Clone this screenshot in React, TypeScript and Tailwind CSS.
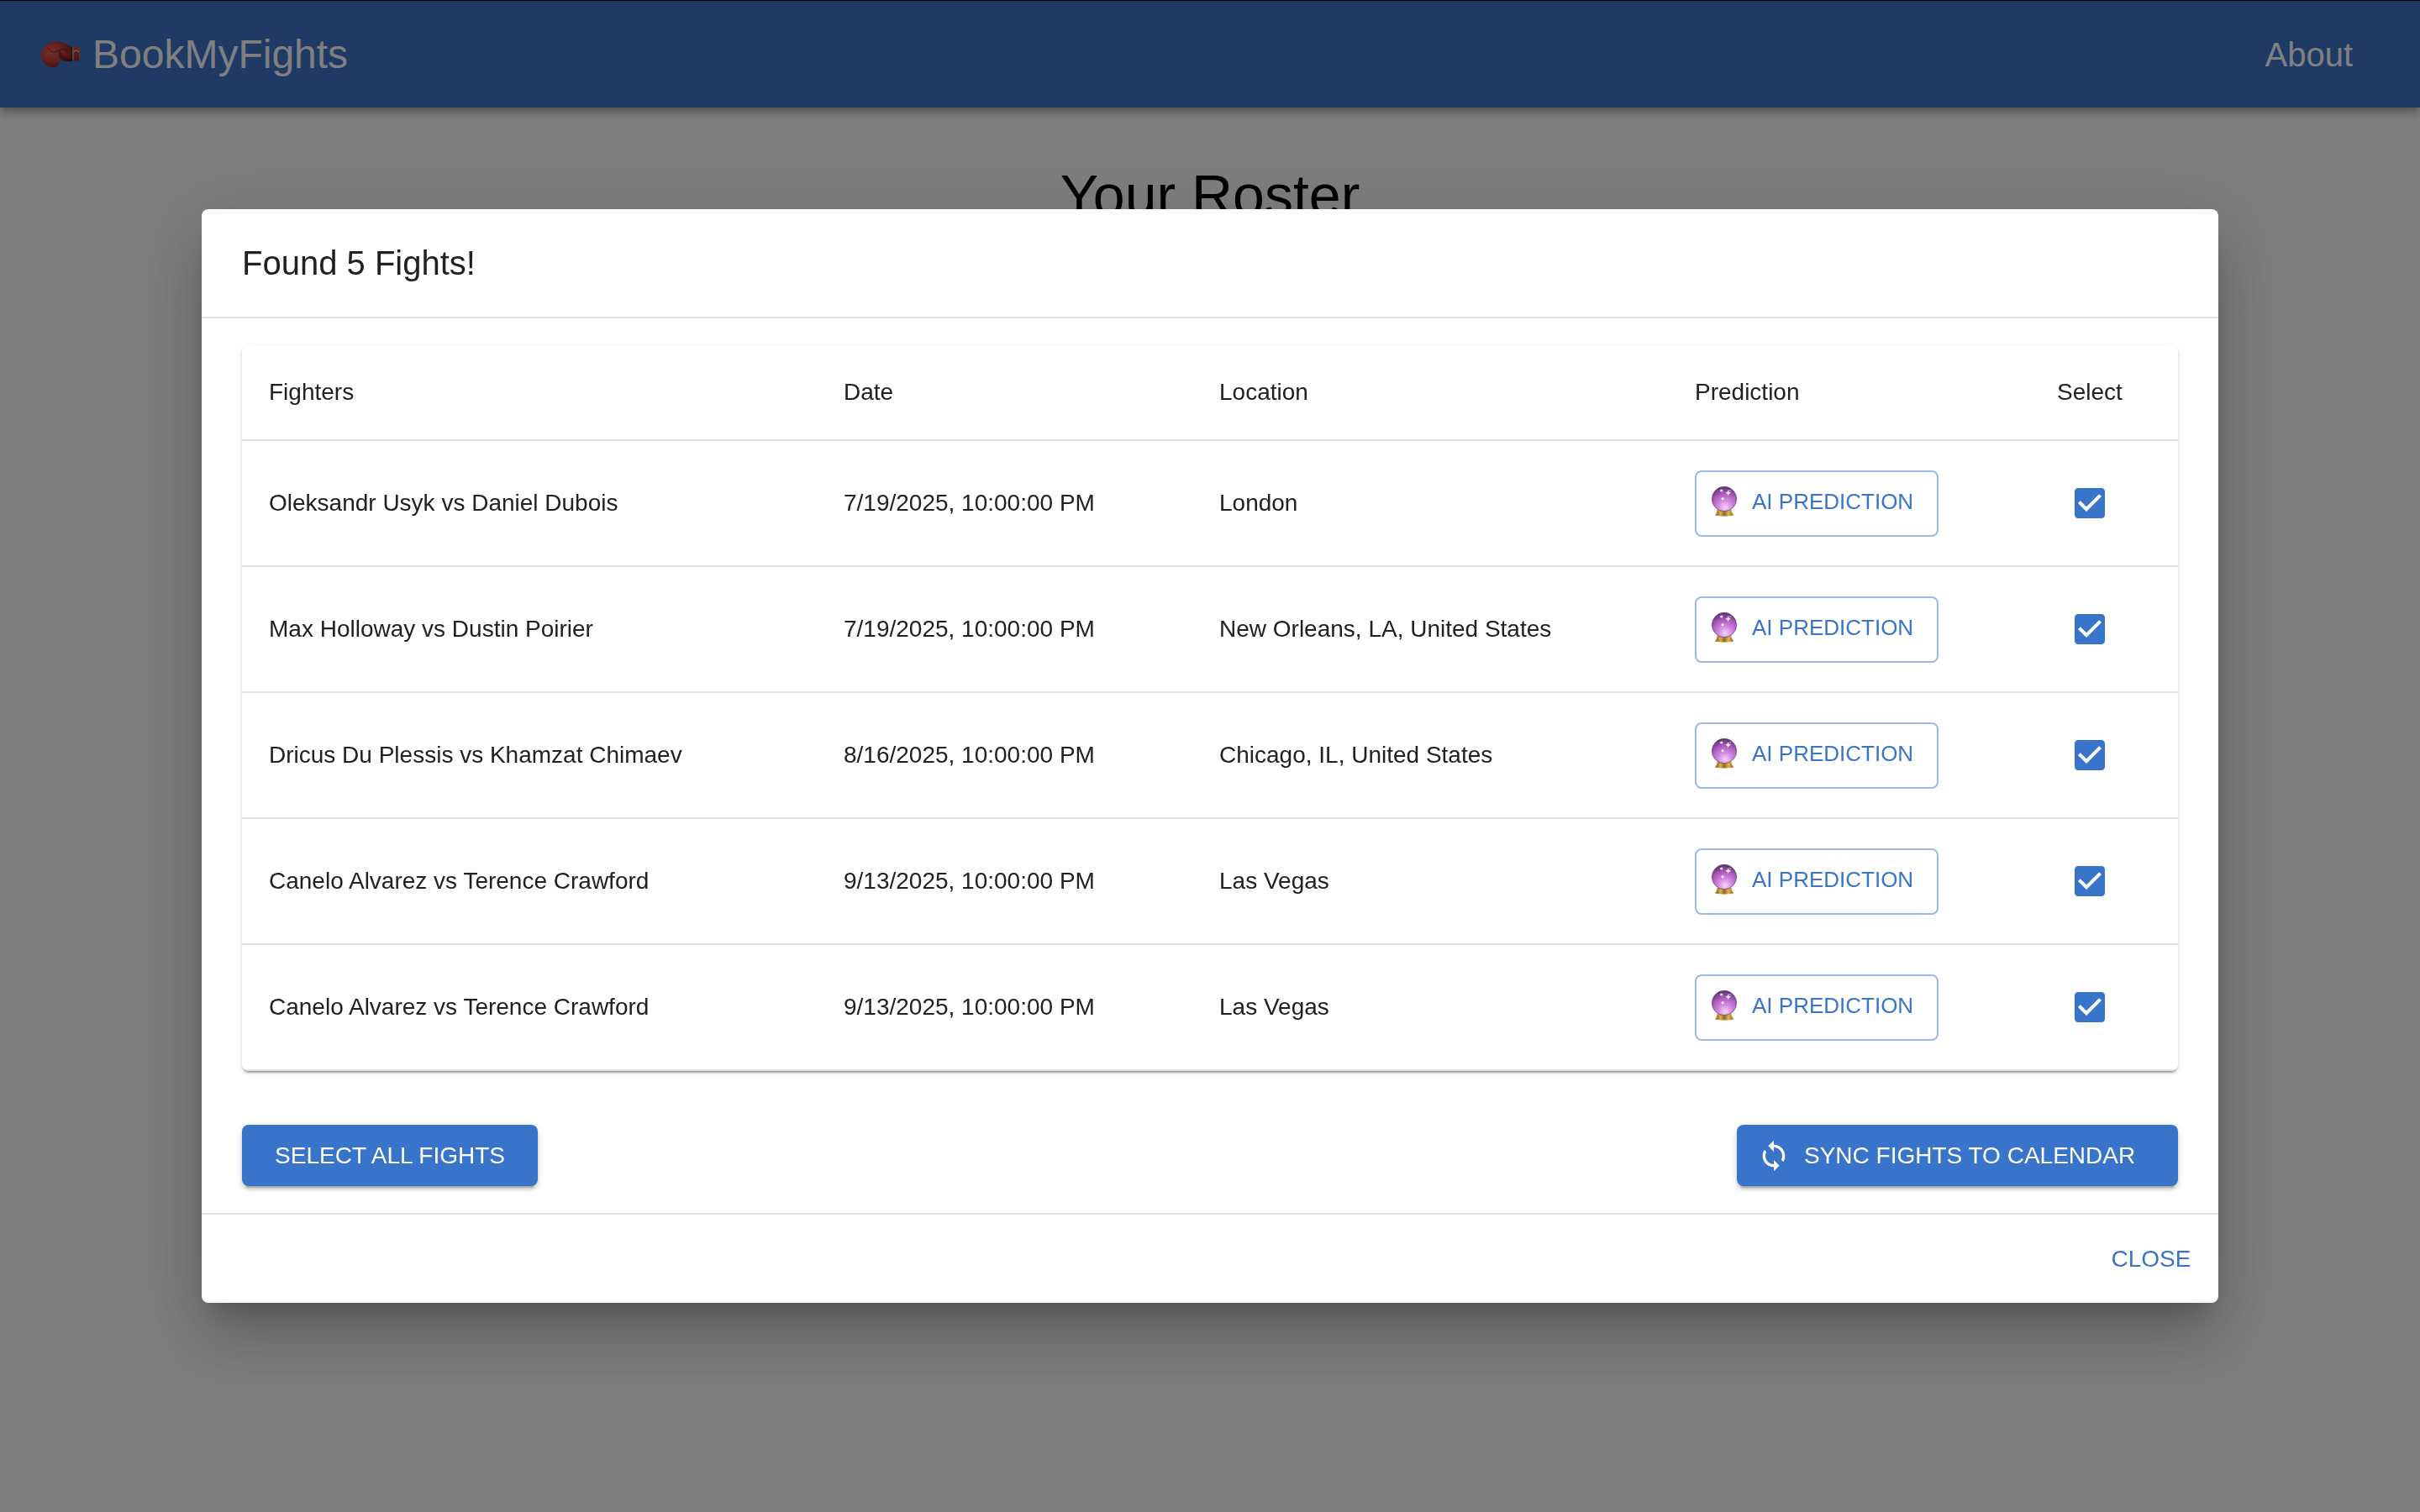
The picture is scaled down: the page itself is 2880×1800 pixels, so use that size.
import { useState } from "react";

type Fight = { id: number; fighters: string; date: string; location: string };

const fights: Fight[] = [
  { id: 1, fighters: "Oleksandr Usyk vs Daniel Dubois", date: "7/19/2025, 10:00:00 PM", location: "London" },
  { id: 2, fighters: "Max Holloway vs Dustin Poirier", date: "7/19/2025, 10:00:00 PM", location: "New Orleans, LA, United States" },
  { id: 3, fighters: "Dricus Du Plessis vs Khamzat Chimaev", date: "8/16/2025, 10:00:00 PM", location: "Chicago, IL, United States" },
  { id: 4, fighters: "Canelo Alvarez vs Terence Crawford", date: "9/13/2025, 10:00:00 PM", location: "Las Vegas" },
  { id: 5, fighters: "Canelo Alvarez vs Terence Crawford", date: "9/13/2025, 10:00:00 PM", location: "Las Vegas" },
];

function BoxingGlove() {
  return (
    <svg aria-hidden="true" viewBox="24 36 144 98" className="h-[33px] w-12 shrink-0">
      <defs>
        <radialGradient id="glove" cx="0.34" cy="0.42" r="0.68">
          <stop offset="0" stopColor="#e0605a" />
          <stop offset="0.5" stopColor="#c8423f" />
          <stop offset="0.85" stopColor="#98292a" />
          <stop offset="1" stopColor="#5e1212" />
        </radialGradient>
        <linearGradient id="cuff" x1="0" y1="0" x2="0" y2="1">
          <stop offset="0" stopColor="#d04a46" />
          <stop offset="1" stopColor="#8c2422" />
        </linearGradient>
      </defs>
      <path
        d="M26 88C26 66 44 49 62 42C82 35 108 41 122 51C128 56 134 59 140 59V108C128 111 112 110 100 106C92 107 94 113 90 121C84 132 70 134 58 130C40 124 26 108 26 88Z"
        fill="url(#glove)"
      />
      <path d="M92 70C86 78 94 86 88 94C92 98 96 102 100 106C112 110 128 111 138 108C120 103 104 88 92 70Z" fill="#4a0c0c" opacity="0.45" />
      <path d="M52 63C56 74 66 79 78 77C88 75 92 67 102 67C110 67 118 72 124 79" fill="none" stroke="#7c2020" strokeWidth="3" strokeLinecap="round" />
      <rect x="139" y="59" width="27" height="49" rx="3" fill="url(#cuff)" />
      <path d="M141 60V107" stroke="#b9a9a2" strokeWidth="4" />
      <path d="M164 61V106" stroke="#b9a9a2" strokeWidth="3" strokeDasharray="4 3" />
      <path d="M143 78C146 69 158 69 161 78" fill="none" stroke="#d9cfca" strokeWidth="4" />
      <path d="M147 81V104M158 81V104" stroke="#8a2a27" strokeWidth="2" />
    </svg>
  );
}

function CrystalBall() {
  return (
    <svg aria-hidden="true" viewBox="74 28 102 114" className="h-[38px] w-[34px] shrink-0">
      <defs>
        <radialGradient id="orb" cx="0.54" cy="0.84" r="0.88">
          <stop offset="0" stopColor="#f6d2fb" />
          <stop offset="0.3" stopColor="#d48ce2" />
          <stop offset="0.65" stopColor="#a858ba" />
          <stop offset="1" stopColor="#4f2a5c" />
        </radialGradient>
        <linearGradient id="stand" x1="0" y1="0" x2="1" y2="0">
          <stop offset="0" stopColor="#7c5a1d" />
          <stop offset="0.3" stopColor="#d9ac45" />
          <stop offset="0.5" stopColor="#8f6a22" />
          <stop offset="0.72" stopColor="#e2b850" />
          <stop offset="1" stopColor="#7c5a1d" />
        </linearGradient>
      </defs>
      <path d="M100 114H150C151 122 154 129 159 134C148 139 102 139 92 134C97 129 99 122 100 114Z" fill="url(#stand)" />
      <circle cx="125" cy="76" r="44" fill="url(#orb)" stroke="#5d3a6b" strokeWidth="2" />
      <circle cx="115" cy="46" r="4.5" fill="#fff" />
      <circle cx="119" cy="75" r="4.5" fill="#fff" />
      <path d="M139 44L142 51L149 54L142 57L139 64L136 57L129 54L136 51Z" fill="#fff" />
      <circle cx="146" cy="46" r="2.5" fill="#fff" opacity="0.8" />
    </svg>
  );
}

function SyncIcon() {
  return (
    <svg aria-hidden="true" viewBox="0 0 24 24" className="size-10 shrink-0" fill="currentColor">
      <path d="M12 4V1L8 5l4 4V6c3.31 0 6 2.69 6 6 0 1.01-.25 1.97-.7 2.8l1.46 1.46C19.54 15.03 20 13.57 20 12c0-4.42-3.58-8-8-8m0 14c-3.31 0-6-2.69-6-6 0-1.01.25-1.97.7-2.8L5.24 7.74C4.46 8.97 4 10.43 4 12c0 4.42 3.58 8 8 8v3l4-4-4-4z" />
    </svg>
  );
}

function FightCheckbox({ label, checked, onChange }: { label: string; checked: boolean; onChange: () => void }) {
  return (
    <label className="inline-grid size-[84px] cursor-pointer place-items-center text-[#3974cb]">
      <input
        type="checkbox"
        aria-label={label}
        checked={checked}
        onChange={onChange}
        className="col-start-1 row-start-1 size-12 cursor-pointer appearance-none"
      />
      <svg aria-hidden="true" viewBox="0 0 24 24" className="pointer-events-none col-start-1 row-start-1 size-12" fill="currentColor">
        {checked ? (
          <path d="M19 3H5c-1.11 0-2 .9-2 2v14c0 1.1.89 2 2 2h14c1.11 0 2-.9 2-2V5c0-1.1-.89-2-2-2zm-9 14l-5-5 1.41-1.41L10 14.17l7.59-7.59L19 8l-9 9z" />
        ) : (
          <path d="M19 5v14H5V5h14m0-2H5c-1.1 0-2 .9-2 2v14c0 1.1.9 2 2 2h14c1.1 0 2-.9 2-2V5c0-1.1-.9-2-2-2z" />
        )}
      </svg>
    </label>
  );
}

const contained =
  "flex h-[73px] items-center rounded-lg bg-[#3974cb] text-[28px] leading-[49px] text-white uppercase shadow-[0_6px_2px_-4px_rgba(0,0,0,0.2),0_4px_4px_0_rgba(0,0,0,0.14),0_2px_10px_0_rgba(0,0,0,0.12)]";

const headCell = "h-[114px] border-b-2 border-[#e0e0e0] px-8 font-normal";
const bodyCell = "h-[150px] border-b-2 border-[#e0e0e0] px-8";

export default function App() {
  const [selected, setSelected] = useState<number[]>(fights.map((f) => f.id));
  const toggle = (id: number) =>
    setSelected((ids) => (ids.includes(id) ? ids.filter((i) => i !== id) : [...ids, id]));

  return (
    <div className="min-h-screen bg-white font-['Liberation_Sans',Arial,sans-serif] text-black">
      <header className="flex h-32 items-center justify-between border-t border-black bg-[#3c74ca] px-12 text-white shadow-[0_4px_8px_-2px_rgba(0,0,0,0.2),0_8px_10px_0_rgba(0,0,0,0.14),0_2px_20px_0_rgba(0,0,0,0.12)]">
        <a href="#home" className="flex items-center gap-3.5 text-5xl">
          <BoxingGlove />
          BookMyFights
        </a>
        <nav>
          <a href="#about" className="px-8 text-[40px] leading-[64px]">About</a>
        </nav>
      </header>
      <main className="pt-[62px]">
        <h1 className="text-center text-[68px] leading-[84px]">Your Roster</h1>
      </main>

      <div className="fixed inset-0 flex items-center justify-center bg-black/50 px-16">
        <div
          role="dialog"
          aria-modal="true"
          aria-labelledby="dialog-title"
          className="w-full max-w-[2400px] rounded-lg bg-white text-[#212121] shadow-[0_22px_30px_-14px_rgba(0,0,0,0.2),0_48px_76px_6px_rgba(0,0,0,0.14),0_18px_92px_16px_rgba(0,0,0,0.12)]"
        >
          <h2 id="dialog-title" className="px-12 py-8 text-[40px] leading-[64px]">Found 5 Fights!</h2>

          <div className="border-y-2 border-[#e0e0e0] px-12 py-8">
            <div className="overflow-hidden rounded-lg shadow-[0_4px_2px_-2px_rgba(0,0,0,0.2),0_2px_2px_0_rgba(0,0,0,0.14),0_2px_6px_0_rgba(0,0,0,0.12)]">
              <table className="w-full table-fixed border-separate border-spacing-0 text-left text-[28px] leading-[48px]">
                <colgroup>
                  <col className="w-[684px]" />
                  <col className="w-[447px]" />
                  <col className="w-[566px]" />
                  <col className="w-[397px]" />
                  <col className="w-[210px]" />
                </colgroup>
                <thead>
                  <tr>
                    <th scope="col" className={headCell}>Fighters</th>
                    <th scope="col" className={headCell}>Date</th>
                    <th scope="col" className={headCell}>Location</th>
                    <th scope="col" className={headCell}>Prediction</th>
                    <th scope="col" className={`${headCell} text-center`}>Select</th>
                  </tr>
                </thead>
                <tbody>
                  {fights.map((fight) => (
                    <tr key={fight.id}>
                      <td className={bodyCell}>{fight.fighters}</td>
                      <td className={bodyCell}>{fight.date}</td>
                      <td className={bodyCell}>{fight.location}</td>
                      <td className={bodyCell}>
                        <button
                          type="button"
                          className="flex h-[79px] w-[290px] items-center gap-4 rounded-lg border-2 border-[#9cb9e5] px-4 pb-1 text-[26px] text-[#3974cb] uppercase"
                        >
                          <CrystalBall />
                          AI Prediction
                        </button>
                      </td>
                      <td className={bodyCell}>
                        <div className="flex justify-center">
                          <FightCheckbox
                            label={`Select ${fight.fighters}`}
                            checked={selected.includes(fight.id)}
                            onChange={() => toggle(fight.id)}
                          />
                        </div>
                      </td>
                    </tr>
                  ))}
                </tbody>
              </table>
            </div>

            <div className="mt-16 flex items-center justify-between">
              <button
                type="button"
                className={`${contained} min-w-[352px] justify-center px-8`}
                onClick={() => setSelected(fights.map((f) => f.id))}
              >
                Select All Fights
              </button>
              <button type="button" className={`${contained} min-w-[525px] gap-4 px-6`}>
                <SyncIcon />
                Sync Fights to Calendar
              </button>
            </div>
          </div>

          <div className="flex justify-end p-4">
            <button type="button" className="h-[73px] min-w-32 px-4 text-[28px] leading-[49px] text-[#3974cb] uppercase">
              Close
            </button>
          </div>
        </div>
      </div>
    </div>
  );
}
